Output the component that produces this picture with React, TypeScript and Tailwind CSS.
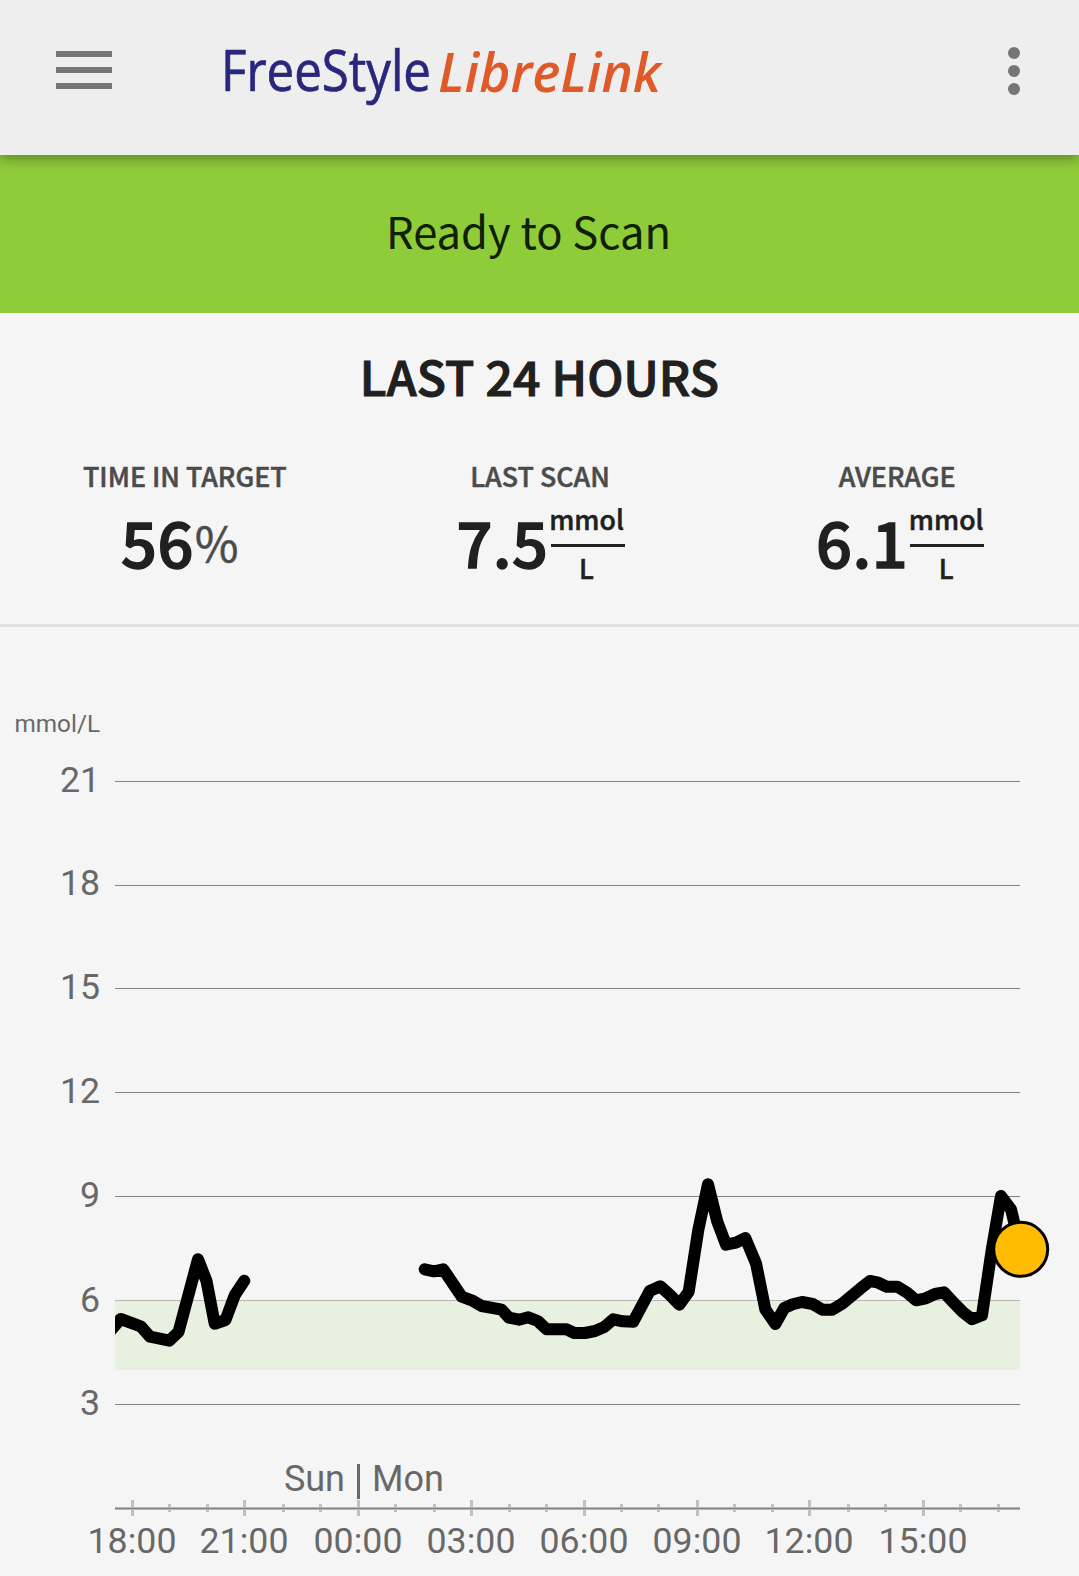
import React from 'react';

type Point = [number, number];

interface StatProps {
    label: string;
    labelClass?: string;
    valueClass?: string;
    children: React.ReactNode;
}

// Plot area edges
const LEFT = 115;
const RIGHT = 1020;
const AXIS_Y = 1508;

const levels = [
    { value: 21, y: 781, baseline: 792 },
    { value: 18, y: 885, baseline: 895 },
    { value: 15, y: 988, baseline: 999 },
    { value: 12, y: 1092, baseline: 1103 },
    { value: 9, y: 1196, baseline: 1207 },
    { value: 6, y: 1300, baseline: 1312 },
    { value: 3, y: 1404, baseline: 1415 },
];

const majorTicks = [
    { x: 132, label: '18:00' },
    { x: 244, label: '21:00' },
    { x: 358, label: '00:00' },
    { x: 471, label: '03:00' },
    { x: 584, label: '06:00' },
    { x: 697, label: '09:00' },
    { x: 809, label: '12:00' },
    { x: 923, label: '15:00' },
];

const minorTicks = [169, 207, 283, 320, 395, 434, 509, 546, 621, 658, 734, 772, 848, 885, 960, 998];

const evening: Point[] = [
    [111, 1330], [120.7, 1319], [140.7, 1326.3], [150, 1336.7], [169.3, 1340.7], [178.5, 1332],
    [198, 1259.3], [206.5, 1281], [214.7, 1323.7], [225.5, 1320], [234.7, 1295.3], [244.3, 1280.7],
];

const day: Point[] = [
    [424.7, 1269.3], [434, 1271.3], [443.3, 1269.3], [461.7, 1296.7], [471.7, 1300.3], [481.7, 1306],
    [501.7, 1309.7], [509, 1317.7], [519, 1319.7], [528.3, 1317.3], [537.7, 1321], [546.7, 1329.3],
    [566.7, 1329.3], [574.3, 1333], [585, 1333], [595, 1331], [604.3, 1327], [613.3, 1319.3],
    [622.7, 1321.3], [633.3, 1321.7], [649.7, 1291], [660.3, 1286.3], [670, 1295], [679.3, 1304.7],
    [688.7, 1291.7], [698.3, 1230], [708, 1184.3], [717.3, 1221.7], [726, 1244.7], [736, 1242.7],
    [745.3, 1238], [756, 1263.3], [765.3, 1309.3], [775.3, 1324], [784.3, 1308], [792.7, 1304.3],
    [802, 1302], [812.7, 1304], [822.3, 1309.7], [832.3, 1309.7], [842.3, 1303.7], [860.7, 1288.3],
    [870, 1281], [877.3, 1282.3], [886.7, 1286.7], [897.3, 1286.7], [906.7, 1292.3], [916, 1300.3],
    [925.7, 1298.3], [935, 1294], [944, 1292.3], [953.3, 1302.3], [962.7, 1312], [972, 1319.3],
    [982, 1315.3], [991.7, 1250], [1001, 1196], [1011, 1209.3], [1020.7, 1249.3],
];

const toPoints = (points: Point[]) => points.map(p => p.join(',')).join(' ');

const Logo: React.FC = () => (
    <svg width="460" height="110" viewBox="0 0 460 110" className="ml-[110px]" aria-label="FreeStyle LibreLink">
        <text
            x="-1"
            y="71"
            textLength="210"
            lengthAdjust="spacingAndGlyphs"
            className="fill-[#29277d] stroke-[#29277d] stroke-[0.7px] font-['Open_Sans',sans-serif] text-[56px]"
        >
            FreeStyle
        </text>
        <text
            x="216"
            y="72"
            textLength="223"
            lengthAdjust="spacingAndGlyphs"
            className="fill-[#df5a28] font-['Open_Sans',sans-serif] text-[55px] font-semibold italic"
        >
            LibreLink
        </text>
    </svg>
);

const Header: React.FC = () => (
    <header className="relative z-10 flex h-[155px] items-start bg-[#eeeeee] pl-14 shadow-[0_5px_11px_rgba(0,0,0,0.3)]">
        <button className="mt-[51px] flex w-14 flex-col gap-2.5" aria-label="Menu">
            <span className="h-1.5 w-full bg-[#757575]" />
            <span className="h-1.5 w-full bg-[#757575]" />
            <span className="h-1.5 w-full bg-[#757575]" />
        </button>
        <div className="mt-5">
            <Logo />
        </div>
        <button className="mt-[47px] mr-[59px] ml-auto flex flex-col gap-1.5" aria-label="More options">
            <span className="size-3 rounded-full bg-[#757575]" />
            <span className="size-3 rounded-full bg-[#757575]" />
            <span className="size-3 rounded-full bg-[#757575]" />
        </button>
    </header>
);

const Stat: React.FC<StatProps> = ({ label, labelClass = '', valueClass = '', children }) => (
    <div className="flex flex-col items-center">
        <span className={`text-[26.8px] leading-[40px] font-medium text-[#4b4b4b] [-webkit-text-stroke:0.5px_#4b4b4b] ${labelClass}`}>
            {label}
        </span>
        <div className={`mt-0.5 flex items-start font-medium text-[#202020] ${valueClass}`}>{children}</div>
    </div>
);

const Amount: React.FC<{ value: string }> = ({ value }) => (
    <span className="text-[63px] leading-[86px] tracking-[0.5px] [-webkit-text-stroke:1.5px_#202020]">{value}</span>
);

const MmolPerLitre: React.FC = () => (
    <div className="ml-0.5 flex w-[74px] flex-col items-center pt-px text-[26.7px] leading-[40px] [-webkit-text-stroke:0.5px_#202020]">
        <span className="pr-0.5">mmol</span>
        <span className="mt-[5px] mb-px h-[3px] w-full bg-[#202020]" />
        <span className="pr-0.5">L</span>
    </div>
);

const GlucoseChart: React.FC = () => (
    <svg width="1079" height="949" viewBox="0 627 1079 949" className="block fill-[#686868] font-[Roboto,sans-serif] text-[35.7px]">
        <defs>
            <clipPath id="plot">
                <rect x={LEFT} y="627" width="964" height="949" />
            </clipPath>
        </defs>

        <text x="100" y="732" textAnchor="end" className="text-[24.3px]">mmol/L</text>
        {levels.map(({ value, y, baseline }) => (
            <g key={value}>
                <rect x={LEFT} y={y} width={RIGHT - LEFT} height="1" className="fill-[#838383]" />
                <text x="100" y={baseline} textAnchor="end">{value}</text>
            </g>
        ))}

        {/* Target range */}
        <rect x={LEFT} y="1300" width={RIGHT - LEFT} height="1" className="fill-[#b3b8ae]" />
        <rect x={LEFT} y="1301" width={RIGHT - LEFT} height="69" className="fill-[#e8f1df]" />

        {/* Time axis */}
        {minorTicks.map(x => (
            <rect key={x} x={x - 1} y={AXIS_Y - 4} width="3" height="8" className="fill-[#c0c0c0]" />
        ))}
        {majorTicks.map(({ x, label }) => (
            <g key={label}>
                <rect x={x - 1} y={AXIS_Y - 8} width="3" height="16" className="fill-[#c0c0c0]" />
                <text x={x} y="1553" textAnchor="middle">{label}</text>
            </g>
        ))}
        <rect x={LEFT} y={AXIS_Y - 1} width={RIGHT - LEFT} height="3" className="fill-[#b8b8b8]" />
        <rect x={LEFT} y={AXIS_Y} width={RIGHT - LEFT} height="1" className="fill-[#808080]" />

        <text x="345" y="1491" textAnchor="end" className="text-[36px]">Sun</text>
        <rect x="357" y="1464" width="3" height="35" />
        <text x="372" y="1491" className="text-[36px]">Mon</text>

        <g clipPath="url(#plot)" fill="none" stroke="#000" strokeWidth="12" strokeLinecap="round" strokeLinejoin="round">
            <polyline points={toPoints(evening)} />
            <polyline points={toPoints(day)} />
        </g>
        <circle cx="1020.7" cy="1249.3" r="27" fill="#ffbc00" stroke="#000" strokeWidth="3" />
    </svg>
);

const App: React.FC = () => {
    return (
        <div className="h-[1576px] w-[1079px] overflow-hidden bg-[#f5f5f5] font-['Noto_Sans_CJK_SC',sans-serif]">
            <Header />
            <div className="flex h-[158px] items-center justify-center bg-[#8fcc3a] pr-[22px] pb-1.5 text-[43.5px] text-[#102000]">
                Ready to Scan
            </div>

            <section className="h-[314px] border-b-[3px] border-[#e0e0e0] pt-[32px]">
                <h1 className="text-center text-[48px] leading-[60px] font-medium tracking-[0.15px] text-[#202020] [-webkit-text-stroke:1.1px_#202020]">
                    LAST 24 HOURS
                </h1>
                <div className="mt-[51px] grid grid-cols-3">
                    <Stat label="TIME IN TARGET" labelClass="pl-2.5">
                        <Amount value="56" />
                        <span className="ml-px text-[47.5px] leading-[88px] font-normal text-[#4b4b4b] [-webkit-text-stroke:0.5px_#4b4b4b]">%</span>
                    </Stat>
                    <Stat label="LAST SCAN" labelClass="pl-px" valueClass="pl-0.5">
                        <Amount value="7.5" />
                        <MmolPerLitre />
                    </Stat>
                    <Stat label="AVERAGE" labelClass="pr-1" valueClass="pl-0.5">
                        <Amount value="6.1" />
                        <MmolPerLitre />
                    </Stat>
                </div>
            </section>

            <GlucoseChart />
        </div>
    );
};

export default App;
